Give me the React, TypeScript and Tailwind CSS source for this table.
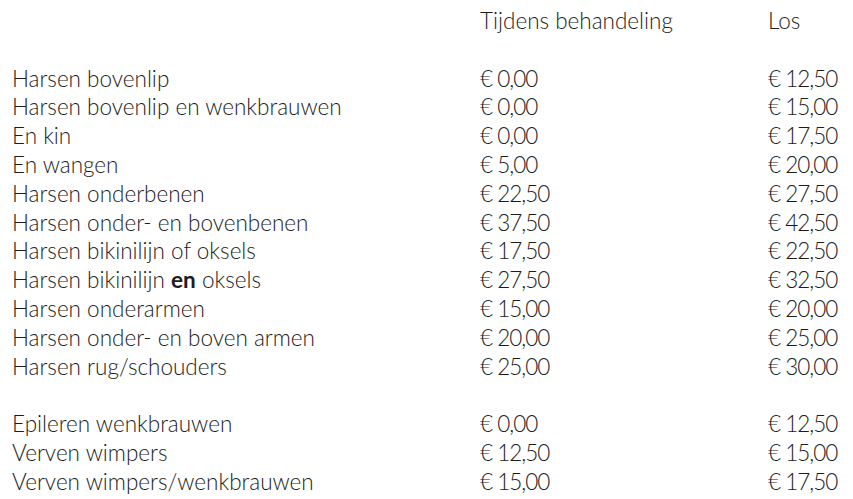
import React from "react";

type Row = { name: React.ReactNode; a: string; b: string } | null;

const rows: Row[] = [
  null,
  { name: "Harsen bovenlip", a: "€ 0,00", b: "€ 12,50" },
  { name: "Harsen bovenlip en wenkbrauwen", a: "€ 0,00", b: "€ 15,00" },
  { name: "En kin", a: "€ 0,00", b: "€ 17,50" },
  { name: "En wangen", a: "€ 5,00", b: "€ 20,00" },
  { name: "Harsen onderbenen", a: "€ 22,50", b: "€ 27,50" },
  { name: "Harsen onder- en bovenbenen", a: "€ 37,50", b: "€ 42,50" },
  { name: "Harsen bikinilijn of oksels", a: "€ 17,50", b: "€ 22,50" },
  {
    name: (
      <>
        Harsen bikinilijn <b className="font-bold">en</b> oksels
      </>
    ),
    a: "€ 27,50",
    b: "€ 32,50",
  },
  { name: "Harsen onderarmen", a: "€ 15,00", b: "€ 20,00" },
  { name: "Harsen onder- en boven armen", a: "€ 20,00", b: "€ 25,00" },
  { name: "Harsen rug/schouders", a: "€ 25,00", b: "€ 30,00" },
  null,
  { name: "Epileren wenkbrauwen", a: "€ 0,00", b: "€ 12,50" },
  { name: "Verven wimpers", a: "€ 12,50", b: "€ 15,00" },
  { name: "Verven wimpers/wenkbrauwen", a: "€ 15,00", b: "€ 17,50" },
];

export default function App() {
  return (
    <div
      className="w-[853px] h-[499px] bg-white text-[#1c1c1c] pl-3 pt-[7px] text-[22.5px] leading-[28.8px] font-light overflow-hidden"
      style={{ fontFamily: "Lato, 'Noto Sans', sans-serif" }}
    >
      <div className="grid grid-cols-[468px_288px_1fr]">
        <div></div>
        <div>Tijdens behandeling</div>
        <div>Los</div>
        {rows.map((r, i) =>
          r === null ? (
            <div key={i} className="col-span-3 h-[28.8px]"></div>
          ) : (
            <React.Fragment key={i}>
              <div>{r.name}</div>
              <div className="tracking-[-1px]">{r.a}</div>
              <div className="tracking-[-1px]">{r.b}</div>
            </React.Fragment>
          )
        )}
      </div>
    </div>
  );
}
